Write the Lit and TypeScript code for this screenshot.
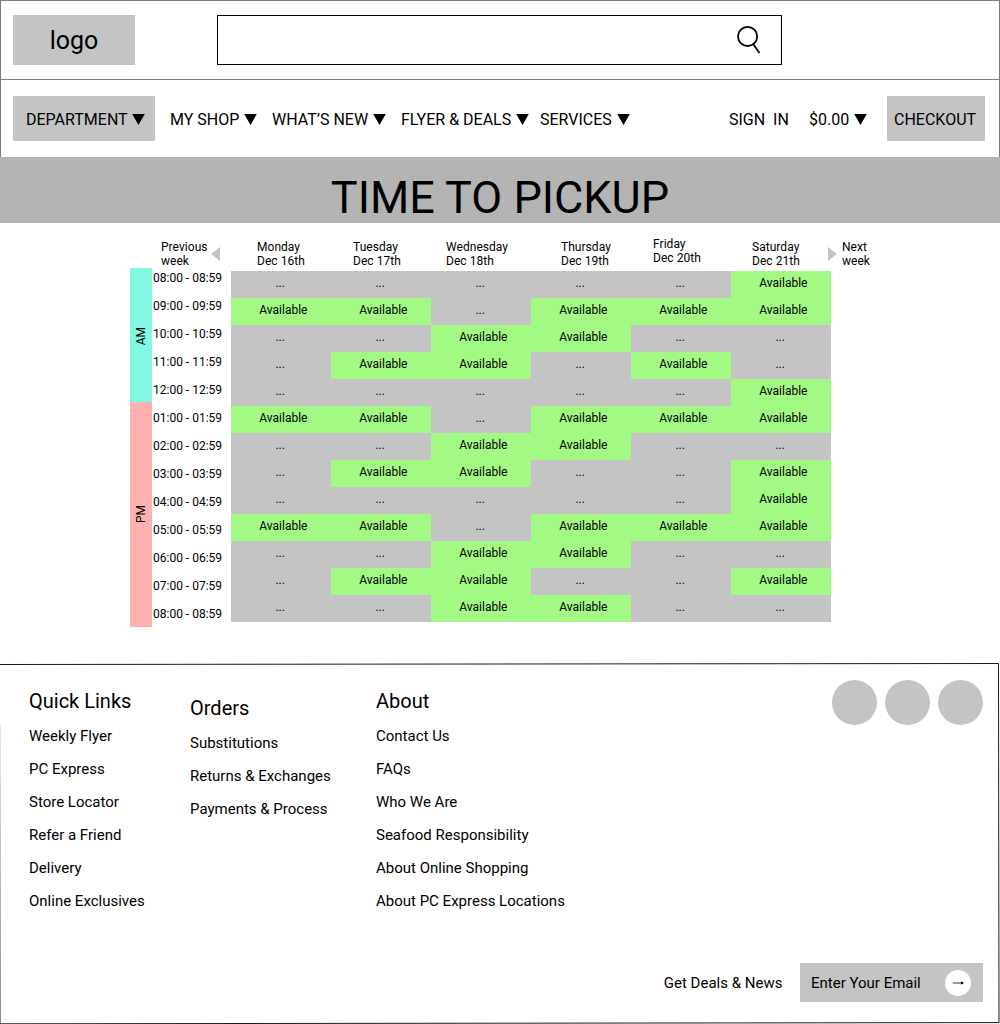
import { LitElement, html, css, svg } from "lit";
import { customElement } from "lit/decorators.js";
import { classMap } from "lit/directives/class-map.js";

const NAV = [
  { id: "department", label: "DEPARTMENT" },
  { id: "shop", label: "MY SHOP" },
  { id: "new", label: "WHAT’S NEW" },
  { id: "flyer", label: "FLYER & DEALS" },
  { id: "services", label: "SERVICES" },
];

const DAYS = [
  ["Monday", "Dec 16th"],
  ["Tuesday", "Dec 17th"],
  ["Wednesday", "Dec 18th"],
  ["Thursday", "Dec 19th"],
  ["Friday", "Dec 20th"],
  ["Saturday", "Dec 21th"],
];

// One entry per hour; each flag is a day, 1 = open for pickup.
const SLOTS: [string, string][] = [
  ["08:00 - 08:59", "000001"],
  ["09:00 - 09:59", "110111"],
  ["10:00 - 10:59", "001100"],
  ["11:00 - 11:59", "011010"],
  ["12:00 - 12:59", "000001"],
  ["01:00 - 01:59", "110111"],
  ["02:00 - 02:59", "001100"],
  ["03:00 - 03:59", "011001"],
  ["04:00 - 04:59", "000001"],
  ["05:00 - 05:59", "110111"],
  ["06:00 - 06:59", "001100"],
  ["07:00 - 07:59", "011001"],
  ["08:00 - 08:59", "001100"],
];

const LINKS = [
  { id: "quick", title: "Quick Links", items: ["Weekly Flyer", "PC Express", "Store Locator", "Refer a Friend", "Delivery", "Online Exclusives"] },
  { id: "orders", title: "Orders", items: ["Substitutions", "Returns & Exchanges", "Payments & Process"] },
  { id: "about", title: "About", items: ["Contact Us", "FAQs", "Who We Are", "Seafood Responsibility", "About Online Shopping", "About PC Express Locations"] },
];

const caret = html`<svg class="caret" viewBox="0 0 13 11">${svg`<path d="M0.2 0H12.8L6.5 11Z"/>`}</svg>`;

@customElement("site-header")
class SiteHeader extends LitElement {
  static styles = css`
    :host { display: block; color: #000; }
    .top, .nav { box-sizing: border-box; border: 1px solid #7c7c7c; display: flex; }
    .top { height: 80px; padding: 14px 0 0 12px; }
    .nav { height: 77px; border-top: 0; border-bottom: 0; padding: 16px 14px 0 12px; font-size: 16px; line-height: 47px; white-space: pre; }
    .logo { width: 122px; height: 50px; background: #c4c4c4; font-size: 25px; line-height: 52px; text-align: center; }
    .search { box-sizing: border-box; width: 565px; height: 50px; margin-left: 82px; border: 1px solid #000; display: flex; justify-content: flex-end; align-items: center; padding-right: 19px; }
    .search svg { width: 28px; height: 30px; fill: none; stroke: #000; stroke-width: 1.8; }
    .item { display: flex; justify-content: space-between; height: 45px; box-sizing: border-box; }
    .caret { width: 13px; height: 11px; flex: none; margin-top: 18px; }
    .department { width: 142px; padding: 0 10px 0 13px; background: #c4c4c4; }
    .shop { width: 87px; margin-left: 15px; }
    .new { width: 114px; margin-left: 15px; }
    .flyer { width: 128px; margin-left: 15px; }
    .services { width: 90px; margin-left: 11px; }
    .signin { margin-left: auto; width: 60px; }
    .price { width: 58px; margin-left: 20px; }
    .checkout { width: 98px; margin-left: 20px; padding-left: 7px; background: #c4c4c4; }
  `;
  render() {
    return html`
      <div class="top">
        <div class="logo">logo</div>
        <div class="search">
          <svg viewBox="0 0 28 30"><circle cx="13.6" cy="11.4" r="9.6"/><path d="M19.4 19.2L25.4 28"/></svg>
        </div>
      </div>
      <nav class="nav">
        ${NAV.map((n) => html`<div class="item ${n.id}"><span>${n.label}</span>${caret}</div>`)}
        <div class="item signin">SIGN  IN</div>
        <div class="item price"><span>$0.00</span>${caret}</div>
        <div class="item checkout">CHECKOUT</div>
      </nav>`;
  }
}

@customElement("pickup-schedule")
class PickupSchedule extends LitElement {
  static styles = css`
    :host { display: block; height: 404px; font-size: 12px; line-height: 14px; }
    .week { display: grid; grid-template-columns: 50px 46px 96px 93px 115px 92px 99px 76px 14px 60px; padding: 17px 0 0 161px; height: 28px; white-space: nowrap; letter-spacing: 0.04px; }
    .day.raised { margin-top: -3px; }
    .prev-arrow, .next-arrow { width: 9px; height: 14px; margin-top: 7px; fill: #c4c4c4; display: block; }
    .body { display: flex; padding-left: 130px; }
    .halves { width: 22px; display: flex; flex-direction: column; }
    .half { display: flex; align-items: center; justify-content: center; }
    .half span { writing-mode: vertical-rl; transform: rotate(180deg); }
    .am { height: 134px; background: #80f8e2; }
    .am span { margin-top: 2px; }
    .pm { height: 225px; background: #ffb0b0; }
    .times { width: 78px; margin: -4px 0 0 1px; line-height: 28px; white-space: nowrap; }
    .grid { display: grid; grid-template-columns: repeat(6, 100px); grid-auto-rows: 27px; margin-top: 3px; height: 351px; }
    .cell { background: #c4c4c4; padding: 5px 0 0 44.4px; }
    .open { background: #a2f983; padding-left: 28.3px; }
  `;
  render() {
    return html`
      <div class="week">
        <div>Previous<br>week</div>
        <svg class="prev-arrow" viewBox="0 0 9 14"><path d="M9 0V14L0 7Z"/></svg>
        ${DAYS.map(([d, n]) => html`<div class=${classMap({ day: true, raised: d === "Friday" })}>${d}<br>${n}</div>`)}
        <svg class="next-arrow" viewBox="0 0 9 14"><path d="M0 0V14L9 7Z"/></svg>
        <div>Next<br>week</div>
      </div>
      <div class="body">
        <div class="halves">
          <div class="half am"><span>AM</span></div>
          <div class="half pm"><span>PM</span></div>
        </div>
        <div class="times">${SLOTS.map(([t]) => html`<div>${t}</div>`)}</div>
        <div class="grid">
          ${SLOTS.map(([, row]) => [...row].map((f) => html`<div class=${classMap({ cell: true, open: f === "1" })}>${f === "1" ? "Available" : "..."}</div>`))}
        </div>
      </div>`;
  }
}

@customElement("site-footer")
class SiteFooter extends LitElement {
  static styles = css`
    :host { display: block; position: relative; height: 361px; box-sizing: border-box; padding: 17px 17px 0 29px; font-size: 15px; }
    .frame { position: absolute; left: 0; top: 0; width: 1000px; height: 361px; fill: none; stroke: #1a1a1a; stroke-width: 1; }
    .main { display: flex; height: 283px; white-space: nowrap; }
    .col { line-height: 33px; padding-top: 8px; }
    .title { font-size: 20px; line-height: 26px; margin-bottom: 6px; }
    .quick { width: 161px; }
    .orders { width: 186px; padding-top: 15px; }
    .social { margin-left: auto; display: flex; gap: 8px; }
    .dot { width: 45px; height: 45px; border-radius: 50%; background: #c4c4c4; }
    .signup { display: flex; justify-content: flex-end; height: 38.7px; line-height: 40px; gap: 17.6px; }
    .field { width: 183px; box-sizing: border-box; padding: 0 12px 0 11px; background: #c4c4c4; display: flex; justify-content: space-between; }
    .go { width: 26px; height: 26px; border-radius: 50%; margin-top: 6.5px; background: #fff; display: flex; align-items: center; justify-content: center; }
    .go svg { width: 12px; height: 6px; }
  `;
  render() {
    return html`
      <svg class="frame" viewBox="0 0 1000 361">
        <path d="M0 1.5L998.5 0.5L999 359.6L0 360.8M-0.41 62L0 361"/>
      </svg>
      <div class="main">
        ${LINKS.map((c) => html`<div class="col ${c.id}"><div class="title">${c.title}</div>${c.items.map((i) => html`<div>${i}</div>`)}</div>`)}
        <div class="social"><div class="dot"></div><div class="dot"></div><div class="dot"></div></div>
      </div>
      <div class="signup">
        <span>Get Deals &amp; News</span>
        <div class="field">
          <span>Enter Your Email</span>
          <div class="go"><svg viewBox="0 0 12 6"><path d="M0.8 3H11" stroke="#000" stroke-width="0.8" fill="none"/><path d="M9 1.2L11.8 3L9 4.8Z"/></svg></div>
        </div>
      </div>`;
  }
}

@customElement("app-root")
class AppRoot extends LitElement {
  static styles = css`
    :host { display: block; width: 1000px; height: 1024px; overflow: hidden; background: #fff; color: #000; font-family: Roboto, "Liberation Sans", sans-serif; }
    .title { height: 66px; background: #b4b4b4; font-size: 45px; line-height: 82px; text-align: center; overflow: hidden; }
    .schedule { display: block; height: 440px; }
  `;
  render() {
    return html`
      <site-header></site-header>
      <div class="title">TIME TO PICKUP</div>
      <div class="schedule"><pickup-schedule></pickup-schedule></div>
      <site-footer></site-footer>`;
  }
}
